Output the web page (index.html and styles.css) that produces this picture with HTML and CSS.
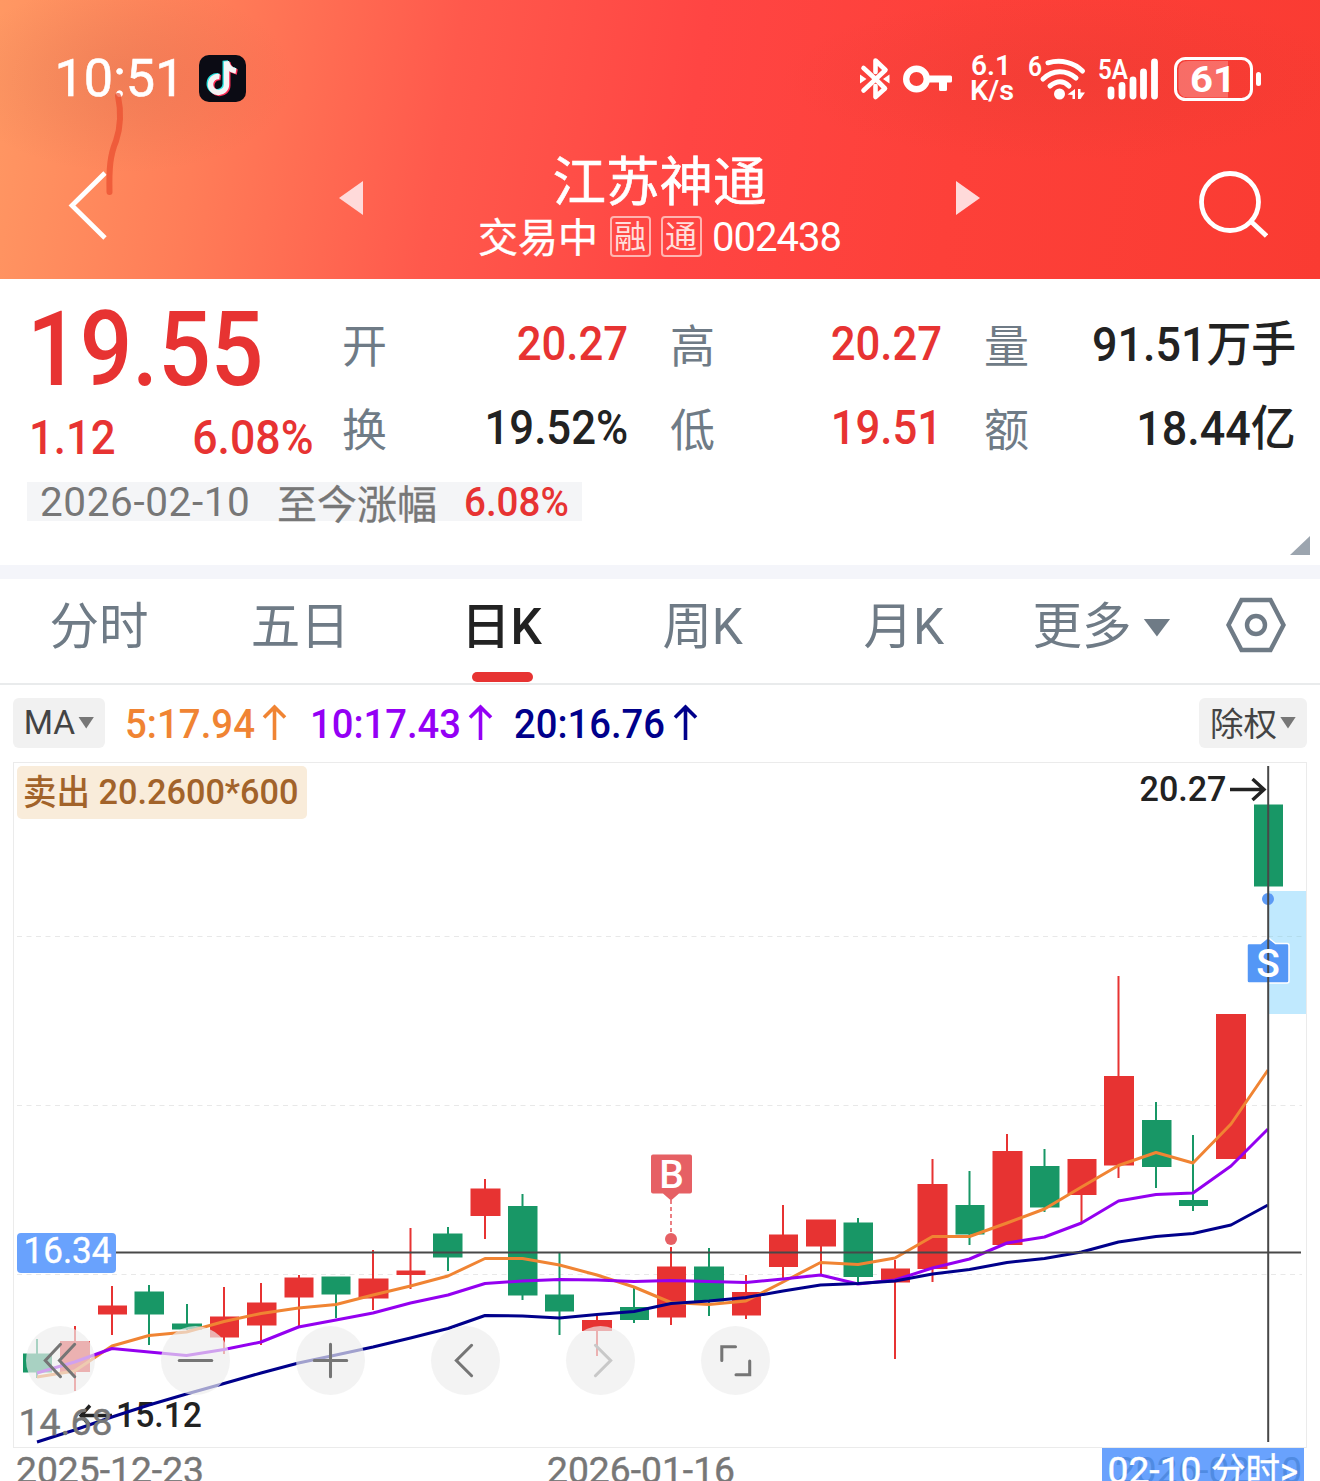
FILE: index.html
```html
<!DOCTYPE html>
<html lang="zh-CN">
<head>
<meta charset="utf-8">
<title>江苏神通 002438</title>
<link rel="stylesheet" href="styles.css">
</head>
<body>
<main class="screen">
  <header class="top">
    <div class="status">
      <svg class="status-left" viewBox="50 50 200 60" width="200" height="60">
        <text class="clock" x="54.500" y="96" textLength="130" lengthAdjust="spacingAndGlyphs">10:51</text>
        <rect x="199" y="55" width="47" height="47" rx="10" fill="#0b0b14"/>
        <g fill="none" stroke-width="5.400">
          <path d="M219.500 76.500a8 8 0 1 0 7 8V61.500c.8 5 4 8.500 9.500 9.500" transform="translate(-1.300 -.8)" stroke="#25e4e0"/>
          <path d="M219.500 76.500a8 8 0 1 0 7 8V61.500c.8 5 4 8.500 9.500 9.500" transform="translate(1.300 1)" stroke="#fe2c55"/>
          <path d="M219.500 76.500a8 8 0 1 0 7 8V61.500c.8 5 4 8.500 9.500 9.500" stroke="#f4f4f4"/>
        </g>
      </svg>
      <svg class="status-right" viewBox="855 50 410 60" width="410" height="60" fill="#fff">
        <path d="M863.500 68 876 79.500 885 88.500 875.500 97V86M875.500 72V60.500l10 9.500-22 20.500" fill="none" stroke="#fff" stroke-width="4.600" stroke-linecap="round" stroke-linejoin="round"/>
        <path d="M860 74.500l6.500 4.500-6.500 4.500zM889.500 74.500 883 79l6.500 4.500z"/>
        <circle cx="916.500" cy="79" r="10.300" fill="none" stroke="#fff" stroke-width="6.400"/>
        <path d="M928 75.500h22.500q1.500 0 1.500 1.500v4q0 1.500-1.500 1.500H947v7q0 1.500-1.500 1.500h-5q-1.500 0-1.500-1.500v-7h-11z"/>
        <text class="tiny" x="971" y="75" textLength="40" lengthAdjust="spacingAndGlyphs">6.1</text>
        <text class="tiny" x="970" y="100" textLength="44" lengthAdjust="spacingAndGlyphs">K/s</text>
        <text class="tiny" x="1028" y="75.500" textLength="14" lengthAdjust="spacingAndGlyphs">6</text>
        <g fill="none" stroke="#fff" stroke-width="5" stroke-linecap="round">
          <path d="M1048 62.800c13-3.500 26-.5 34.500 8.200"/>
          <path d="M1043 79c10-9.500 23-9.500 33-1"/>
          <path d="M1050 86q10.500-8.500 19 0"/>
        </g>
        <circle cx="1059.500" cy="94" r="5.500"/>
        <path d="M1075 89v10h-2.500v-4l-5-.5zM1078 89h2.500v3.500h4.500l-4.500 6.500h-2.500z"/>
        <text class="tiny" x="1098" y="79" textLength="30" lengthAdjust="spacingAndGlyphs">5A</text>
        <path d="M1111 90v6M1122 85.500v10.500M1133 80v16M1143.500 72v24M1154.500 62v34" stroke="#fff" stroke-width="6.800" stroke-linecap="round"/>
        <rect x="1175.500" y="58.500" width="76" height="41" rx="10" fill="none" stroke="#fff" stroke-width="3"/>
        <path d="M1228 61v36.500h-40q-9.500 0-9.500-9.500V70q0-9 9.500-9z" fill-opacity=".25"/>
        <rect x="1256" y="72" width="5" height="14" rx="2.500"/>
        <text class="battery" x="1190" y="92" textLength="46" lengthAdjust="spacingAndGlyphs">61</text>
      </svg>
    </div>
    <nav class="title-bar">
      <svg class="back" viewBox="0 0 40 70" width="40" height="70"><path d="M37 2 4 34.500 37 67" fill="none" stroke="#fff" stroke-width="4.800"/></svg>
      <svg class="prev" viewBox="0 0 24 34" width="24" height="34"><path d="M24 0v34L0 17z" fill="#ffdada"/></svg>
      <div class="stock">
        <h1>江苏神通</h1>
        <div class="stock-sub"><span class="state">交易中</span><span class="tag">融</span><span class="tag">通</span><span class="code">002438</span></div>
      </div>
      <svg class="next" viewBox="0 0 24 34" width="24" height="34"><path d="M0 0v34l24-17z" fill="#ffdada"/></svg>
      <svg class="search" viewBox="0 0 70 70" width="70" height="70" fill="none" stroke="#fff" stroke-width="4.800"><circle cx="32" cy="33" r="28.500"/><path d="M52.500 52 68.500 67"/></svg>
    </nav>
    <svg class="scribble" viewBox="0 0 30 110" width="30" height="110"><path d="M18 6c4 19 2 33-2 45-6 14-7 28-6.500 51" fill="none" stroke="#ea4c2d" stroke-opacity=".7" stroke-width="6" stroke-linecap="round"/></svg>
  </header>

  <section class="quote">
    <div class="price">
      <strong>19.55</strong>
      <div class="change"><span>1.12</span><span>6.08%</span></div>
    </div>
    <dl class="stats">
      <dt>开</dt><dd class="up">20.27</dd>
      <dt>高</dt><dd class="up">20.27</dd>
      <dt>量</dt><dd class="unit">91.51万手</dd>
      <dt>换</dt><dd>19.52%</dd>
      <dt>低</dt><dd class="up">19.51</dd>
      <dt>额</dt><dd class="unit">18.44亿</dd>
    </dl>
    <div class="since"><span class="day">2026-02-10</span><span class="label">至今涨幅</span><span class="rise">6.08%</span></div>
    <i class="corner"></i>
  </section>

  <nav class="tabs">
    <a>分时</a><a>五日</a><a class="active">日K</a><a>周K</a><a>月K</a>
    <a class="more">更多<i class="caret"></i></a>
    <svg class="settings" viewBox="0 0 62 56" width="62" height="56" fill="none" stroke="#6f7b86" stroke-width="4.400"><path d="M16.500 3h29L58.500 28l-13 25h-29L3.500 28z"/><circle cx="31" cy="28" r="9"/></svg>
  </nav>

  <section class="indicators">
    <button class="pill">MA<i class="caret small"></i></button>
    <svg viewBox="120 698 590 50" width="590" height="50">
      <g class="ma">
        <text x="125" y="738" fill="#f08433" textLength="130" lengthAdjust="spacingAndGlyphs">5:17.94</text>
        <text x="310" y="738" fill="#9400f5" textLength="151" lengthAdjust="spacingAndGlyphs">10:17.43</text>
        <text x="514" y="738" fill="#00008b" textLength="151" lengthAdjust="spacingAndGlyphs">20:16.76</text>
      </g>
      <g fill="none" stroke-width="3.600">
        <path d="M264 717.500 274.500 707 285 717.500M274.500 707v33" stroke="#f08433"/>
        <path d="M470 717.500 480.500 707 491 717.500M480.500 707v33" stroke="#9400f5"/>
        <path d="M675 717.500 685.500 707 696 717.500M685.500 707v33" stroke="#00008b"/>
      </g>
    </svg>
    <button class="pill right"><span>除权</span><i class="caret small"></i></button>
  </section>

  <section class="chart">
    <svg class="plot" viewBox="0 762 1320 719" width="1320" height="719">
      <rect x="13.500" y="762.500" width="1293" height="685" fill="none" stroke="#ebebeb"/>
      <path d="M17 936.500H1302M17 1105.500H1302M17 1274.500H1302" stroke="#e8e8e8" stroke-dasharray="5 4.500"/>
      <rect x="1268" y="891" width="38" height="123" fill="#c0e9fe"/>
      <path d="M1268 936.500h34" stroke="#b4dcec" stroke-dasharray="5 4.500"/>
      <g stroke="#e73332" stroke-width="2" fill="none">
        <path d="M75 1326V1391M112 1286V1335M224 1287V1354M261 1283V1345M299 1275V1326M373 1250V1310M410.500 1228V1289M485 1179V1239M597 1316V1356M671 1247V1325M746 1275V1319M783 1205V1280M821 1220V1275M895 1260V1359M932.500 1159V1282M1007 1134V1245M1081.500 1159V1222M1118.500 976V1178"/>
      </g>
      <g stroke="#189766" stroke-width="2" fill="none">
        <path d="M37 1339V1378M149 1285V1345M187 1304V1330M336 1277V1318M448 1227V1271M522.500 1194V1300M559.500 1253V1335M634 1286V1323M709 1248V1316M858 1218V1282M969.500 1171V1245M1044.500 1149V1212M1156 1102V1188M1193 1135V1211"/>
      </g>
      <path fill="#e73332" d="M60 1341h30v31h-30zM98 1305.500h29v9h-29zM210 1316.500h29v21h-29zM247 1302.500h29.500v23h-29.500zM284.500 1277.500h29v20h-29zM358.500 1278.500h30v20h-30zM396.500 1270.500h29v4.500h-29zM470.500 1188.500h30v27.500h-30zM582 1320h30v11h-30zM657 1266.500h29v51h-29zM732 1292h29v23.500h-29zM769 1234.500h29v32.500h-29zM806 1219.500h30v27h-30zM881 1268.500h29v14h-29zM917.500 1184h30v85h-30zM992.500 1151h30v94h-30zM1067.500 1159h29v36h-29zM1104 1076h30v89.500h-30zM1216 1014h30v145h-30z"/>
      <path fill="#189766" d="M23 1353.500h29v19h-29zM134.500 1291.500h29.500v23h-29.500zM172 1323.500h30v6h-30zM321.500 1276.500h29v18h-29zM433 1233.500h29.500v24h-29.500zM508 1206h29.500v89.500h-29.500zM545 1294.500h29v17h-29zM620 1307h29v13h-29zM694 1266.500h30v35h-30zM843.500 1222.500h29.500v54.500h-29.500zM955.500 1205h29v29.500h-29zM1030 1166h29.500v41.500h-29.500zM1142 1120h29.500v47h-29.500zM1179 1200h29v6h-29zM1254 804.500h29v82h-29z"/>
      <g class="dark">
        <text x="1139.500" y="801" textLength="87" lengthAdjust="spacingAndGlyphs">20.27</text>
        <path d="M1230 789.500h33M1252.500 779l11.500 10.500-11.500 10.500"/>
        <text x="116" y="1427" textLength="86" lengthAdjust="spacingAndGlyphs">15.12</text>
        <path d="M112 1415.500H82M90 1405.500l-9 10 9 10"/>
      </g>
      <g class="ma-lines">
        <polyline stroke="#f08433" points="37,1377 74.600,1371 112,1346 149,1335.500 186.500,1332 224,1321.500 261,1313.500 298.500,1308 336,1304.500 373,1295 410.500,1286 448,1276 485,1258.500 522.500,1258.500 559.500,1265 597,1275 634,1287 671,1302.500 709,1304.500 746,1301 783,1282 820.500,1262.500 858,1264.500 895,1258 932.500,1236.500 969.500,1236.500 1007,1223 1044.500,1209 1081.500,1187 1118.500,1165.500 1156,1152.500 1193,1163 1231,1124 1268,1070"/>
        <polyline stroke="#9400f0" points="37,1373 74.600,1362 112,1348.500 149,1352 186.500,1355.500 224,1349.500 261,1342 298.500,1327 336,1320 373,1313 410.500,1303 448,1295 485,1283.500 522.500,1281 559.500,1279.500 597,1280 634,1281.500 671,1280.500 709,1281.500 746,1282.500 783,1279 820.500,1275 858,1284 895,1280 932.500,1268 969.500,1259 1007,1243 1044.500,1237 1081.500,1223 1118.500,1201 1156,1194.500 1193,1193 1231,1166 1268,1129"/>
        <polyline stroke="#00008b" points="37,1442 74.600,1430 112,1417 149,1405 186.500,1394 224,1383.500 261,1373 298.500,1363 336,1355 373,1347 410.500,1338 448,1328.500 485,1315.500 522.500,1316 559.500,1318 597,1314.500 634,1311.500 671,1303.500 709,1301 746,1297.500 783,1291 820.500,1285 858,1283.500 895,1281 932.500,1274 969.500,1269.500 1007,1262.500 1044.500,1258.500 1081.500,1252 1118.500,1242 1156,1236.500 1193,1233.500 1231,1225 1268,1205"/>
      </g>
      <text class="axis" x="18.500" y="1435" textLength="94" lengthAdjust="spacingAndGlyphs">14.68</text>
      <path d="M671 1200v36" stroke="#e66064" stroke-width="1.600" stroke-dasharray="4 3"/>
      <circle cx="671" cy="1239" r="6" fill="#e66064"/>
      <path d="M653 1154.500h37q2 0 2 2v35q0 2-2 2h-11l-8 7-8-7h-10q-2 0-2-2v-35q0-2 2-2z" fill="#e66064"/>
      <text class="mark" x="671.500" y="1188">B</text>
      <circle cx="1268" cy="899" r="6" fill="#5c9af5"/>
      <path d="M1249 943.500h11.500l7.500-6 7.500 6h11.500q2 0 2 2V981q0 2-2 2h-38q-2 0-2-2v-35.500q0-2 2-2z" fill="#5497f6" stroke="#fff" stroke-width="1.500"/>
      <path d="M116 1252.500H1301M1268.200 766V1442" stroke="#484848" stroke-width="2"/>
      <text class="mark" x="1268" y="977">S</text>
      <rect x="17" y="1233" width="99" height="40" rx="4" fill="#69a2fd"/>
      <text class="axis light" x="23.500" y="1263" textLength="88" lengthAdjust="spacingAndGlyphs">16.34</text>
      <rect x="17" y="766" width="290" height="53" rx="5" fill="#f9ecda"/>
      <text class="trade" x="23" y="805" textLength="67" lengthAdjust="spacingAndGlyphs">卖出</text>
      <text class="trade" x="98.500" y="804" textLength="200" lengthAdjust="spacingAndGlyphs">20.2600*600</text>
      <g class="axis">
        <text x="16" y="1482.500" textLength="188" lengthAdjust="spacingAndGlyphs">2025-12-23</text>
        <text x="547" y="1482.500" textLength="188" lengthAdjust="spacingAndGlyphs">2026-01-16</text>
      </g>
      <rect x="1102" y="1448" width="202" height="33" fill="#69a2fd"/>
      <text class="axis ghost" x="1115" y="1482.500" textLength="187" lengthAdjust="spacingAndGlyphs">2026-02-10</text>
      <text class="axis light" x="1107.500" y="1482.500" textLength="94" lengthAdjust="spacingAndGlyphs">02-10</text>
      <text class="axis light" x="1211" y="1483.500" textLength="87" lengthAdjust="spacingAndGlyphs">分时&gt;</text>
    </svg>
    <div class="controls">
      <button><svg viewBox="0 0 68 68"><path d="M34 18 19 34 34 50M48 18 33 34 48 50"/></svg></button>
      <button><svg viewBox="0 0 68 68"><path d="M18 34h32"/></svg></button>
      <button><svg viewBox="0 0 68 68"><path d="M18 34h32M34 18v32"/></svg></button>
      <button><svg viewBox="0 0 68 68"><path d="M40 19 25 34 40 49"/></svg></button>
      <button class="off"><svg viewBox="0 0 68 68"><path d="M29 19 44 34 29 49"/></svg></button>
      <button><svg viewBox="0 0 68 68"><path d="M34 20.500H20.500V34M48 34.500V48H34.500"/></svg></button>
    </div>
  </section>
</main>
</body>
</html>
```
FILE: styles.css
```css
* { box-sizing: border-box; }
body {
  margin: 0;
  background: #fff;
  color: #222;
  font-family: Roboto, "Noto Sans CJK SC", sans-serif;
}
button { border: 0; padding: 0; font: inherit; }
svg { display: block; flex: none; }
.screen { width: 1320px; height: 1481px; overflow: hidden; display: flex; flex-direction: column; }

.top {
  position: relative;
  flex: none;
  height: 279px;
  background:
    radial-gradient(ellipse 170px 95px at 125px 78px, rgba(170, 80, 60, .17), rgba(170, 80, 60, .09) 50%, transparent),
    radial-gradient(ellipse 290px 85px at 1070px 78px, rgba(190, 50, 40, .15), rgba(190, 50, 40, .08) 50%, transparent),
    linear-gradient(99deg, #ff9863 0%, #ff7d58 16%, #ff594c 34%, #ff4543 52%, #fd4039 72%, #fa3b32 100%);
}
.status { display: flex; justify-content: space-between; padding: 50px 55px 0 50px; }
.clock { font-size: 52px; font-weight: 400; fill: #fff; stroke: #fff; stroke-width: .600px; }
.tiny { font-size: 28px; font-weight: 600; }
.battery { font-size: 37px; font-weight: 700; }
.title-bar { display: flex; align-items: flex-start; height: 169px; padding: 0 52px 0 68px; }
.back { margin-top: 61px; }
.prev { margin: 71px 0 0 231px; }
.stock { width: 593px; color: #fff; padding-top: 41px; }
.stock h1 { margin: 0; font-size: 53.500px; line-height: 64px; font-weight: 400; text-align: center; -webkit-text-stroke: .600px #fff; }
.stock-sub { display: flex; align-items: center; justify-content: center; height: 50px; margin-top: -3px; }
.state { font-size: 40px; margin-right: 12px; line-height: 50px; padding-top: 3px; -webkit-text-stroke: .400px #fff; }
.tag {
  width: 41px; height: 41px; margin: -1px 10px 0 0;
  border: 2px solid #ffb4b0; border-radius: 4px;
  font-size: 32px; line-height: 39px; text-align: center; text-indent: -1px; color: #ffdedc;
}
.code { font-size: 40px; letter-spacing: -1px; line-height: 50px; padding-top: 1px; }
.next { margin-top: 71px; }
.search { margin: 59px 0 0 auto; }
.scribble { position: absolute; left: 100px; top: 90px; }

.quote {
  position: relative;
  flex: none;
  height: 286px;
  padding: 24px 24px 0 27px;
  display: grid;
  grid-template-columns: 315px 954px;
  grid-template-rows: 168px 39px;
  row-gap: 11px;
}
.price { color: #e73332; font-weight: 500; }
.price strong {
  display: block; width: 258px;
  font-size: 103px; line-height: 94px; font-weight: 500;
  transform: scaleX(.900); transform-origin: left;
}
.change { display: flex; justify-content: space-between; padding: 16px 28px 0 2px; font-size: 48px; line-height: 50px; }
.change span { transform: scaleX(.910); transform-origin: left; }
.change span:last-child { transform: scaleX(.930); transform-origin: right; }
.stats {
  margin: 0;
  display: grid;
  grid-template-columns: 46px 240px 88px 226px 88px 266px;
  grid-template-rows: 84px 84px;
  line-height: 82px;
  font-size: 47.500px;
}
.stats dt { color: #6f7b86; font-size: 45px; line-height: 89px; }
.stats dt:nth-of-type(3n+2), .stats dt:nth-of-type(3n) { padding-left: 42px; }
.stats dd { margin: 0; justify-self: end; font-weight: 500; transform: scaleX(.920); transform-origin: right; }
.stats .unit { line-height: 84px; transform: scaleX(.945); }
.stats .up { color: #e73332; }
.since {
  display: flex; align-items: center;
  width: 555px; height: 39px; padding-left: 13px;
  background: #f4f5f7; color: #777; line-height: 39px; white-space: nowrap;
}
.since .day { width: 237px; font-size: 40.500px; letter-spacing: .600px; padding-top: 2px; }
.since .label { width: 187px; font-size: 40px; padding-top: 7px; -webkit-text-stroke: .300px #777; }
.since .rise { font-size: 41px; font-weight: 500; color: #e73332; padding-top: 2px; transform: scaleX(.940); transform-origin: left; }
.corner { position: absolute; right: 10px; bottom: 10px; width: 20px; height: 19px; background: #9ca5af; clip-path: polygon(100% 0, 100% 100%, 0 100%); }

.tabs {
  flex: none;
  display: flex; height: 120px;
  border-top: 14px solid #f4f5fa; border-bottom: 2px solid #e9ebec;
  color: #6f7b86; font-size: 49.500px; line-height: 97px;
}
.tabs a { width: 201.200px; text-align: center; position: relative; left: -1.500px; }
.tabs .active { color: #222; font-weight: 500; }
.tabs .active::after { content: ""; position: absolute; left: 71.500px; bottom: 1px; width: 61px; height: 10px; border-radius: 5px; background: #e73332; }
.tabs .more { width: 138px; margin-left: 28px; display: flex; align-items: center; height: 97px; gap: 12px; white-space: nowrap; }
.caret { display: block; flex: none; width: 27px; height: 18px; background: #6f7b86; clip-path: polygon(0 0, 100% 0, 50% 100%); }
.caret.small { width: 16px; height: 12px; margin-top: -1px; background: #777; }
.settings { margin: 18px 0 0 53px; }

.indicators { flex: none; display: flex; height: 77px; padding: 13px 13px 0; }
.pill {
  width: 92px; height: 50px; border-radius: 6px; background: #f1f1f1; color: #444;
  display: flex; align-items: center; justify-content: center; gap: 3px;
  font-size: 33.500px; line-height: 50px; white-space: nowrap;
}
.pill + svg { margin-left: 15px; }
.pill.right { width: 108px; margin-left: auto; }
.pill span { padding-top: 3px; }
.ma { font-size: 40.500px; font-weight: 500; }

.chart { position: relative; flex: none; height: 719px; }
.ma-lines { fill: none; stroke-width: 3; stroke-linejoin: round; }
.dark { fill: #222; font-size: 35px; font-weight: 500; }
.dark path { fill: none; stroke: #222; stroke-width: 3.400; }
.axis { font-size: 36px; fill: #777; stroke: #777; stroke-width: .400px; }
.axis.light { fill: #fff; stroke: #fff; }
.axis.ghost { fill: #508be2; stroke: none; }
.mark { font-size: 39px; font-weight: 500; fill: #fff; text-anchor: middle; }
.trade { font-size: 35px; font-weight: 500; fill: #a2632a; }
.controls { position: absolute; left: 26px; top: 564px; display: flex; gap: 66px; }
.controls button { width: 69px; height: 69px; border-radius: 50%; background: rgba(237, 237, 237, .680); }
.controls path { fill: none; stroke: #757575; stroke-width: 3; stroke-linecap: round; }
.controls .off path { stroke: #c8c8c8; }
```
